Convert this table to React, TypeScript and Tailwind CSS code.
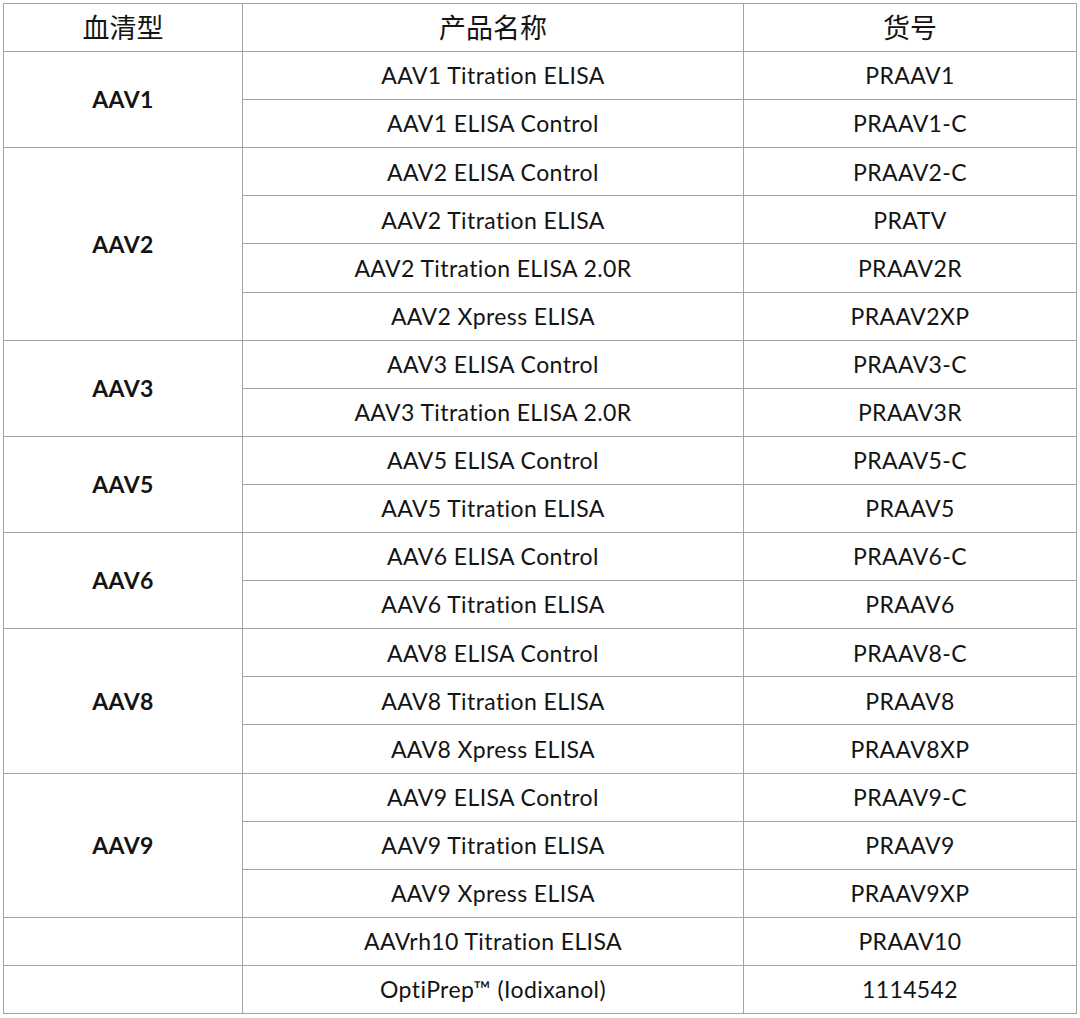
const groups: { serotype: string; items: [string, string][] }[] = [
  { serotype: "AAV1", items: [["AAV1 Titration ELISA", "PRAAV1"], ["AAV1 ELISA Control", "PRAAV1-C"]] },
  {
    serotype: "AAV2",
    items: [
      ["AAV2 ELISA Control", "PRAAV2-C"],
      ["AAV2 Titration ELISA", "PRATV"],
      ["AAV2 Titration ELISA 2.0R", "PRAAV2R"],
      ["AAV2 Xpress ELISA", "PRAAV2XP"],
    ],
  },
  { serotype: "AAV3", items: [["AAV3 ELISA Control", "PRAAV3-C"], ["AAV3 Titration ELISA 2.0R", "PRAAV3R"]] },
  { serotype: "AAV5", items: [["AAV5 ELISA Control", "PRAAV5-C"], ["AAV5 Titration ELISA", "PRAAV5"]] },
  { serotype: "AAV6", items: [["AAV6 ELISA Control", "PRAAV6-C"], ["AAV6 Titration ELISA", "PRAAV6"]] },
  {
    serotype: "AAV8",
    items: [
      ["AAV8 ELISA Control", "PRAAV8-C"],
      ["AAV8 Titration ELISA", "PRAAV8"],
      ["AAV8 Xpress ELISA", "PRAAV8XP"],
    ],
  },
  {
    serotype: "AAV9",
    items: [
      ["AAV9 ELISA Control", "PRAAV9-C"],
      ["AAV9 Titration ELISA", "PRAAV9"],
      ["AAV9 Xpress ELISA", "PRAAV9XP"],
    ],
  },
  { serotype: "", items: [["AAVrh10 Titration ELISA", "PRAAV10"]] },
  { serotype: "", items: [["OptiPrep™ (Iodixanol)", "1114542"]] },
];

const cell = "border border-[#a3a3a3] text-center align-middle p-0";
const head = `${cell} font-normal text-[27px] tracking-normal font-['Noto_Sans_CJK_SC',sans-serif]`;

export default function App() {
  return (
    <div className="bg-white w-[1080px] h-[1018px] pt-[3px] pl-[3px] font-['Lato','Noto_Sans_CJK_SC',sans-serif] text-[#141414]">
      <table className="border-collapse w-[1073px] table-fixed text-[23px] tracking-[0.4px]">
        <colgroup>
          <col className="w-[239px]" />
          <col className="w-[501px]" />
          <col className="w-[333px]" />
        </colgroup>
        <thead>
          <tr className="h-[48.1px]">
            <th className={head}>血清型</th>
            <th className={head}>产品名称</th>
            <th className={head}>货号</th>
          </tr>
        </thead>
        <tbody>
          {groups.map((g, gi) =>
            g.items.map(([name, code], i) => (
              <tr key={`${gi}-${i}`} className="h-[48.1px]">
                {i === 0 && (
                  <td rowSpan={g.items.length} className={`${cell} font-bold`}>
                    {g.serotype}
                  </td>
                )}
                <td className={cell}>{name}</td>
                <td className={cell}>{code}</td>
              </tr>
            ))
          )}
        </tbody>
      </table>
    </div>
  );
}
